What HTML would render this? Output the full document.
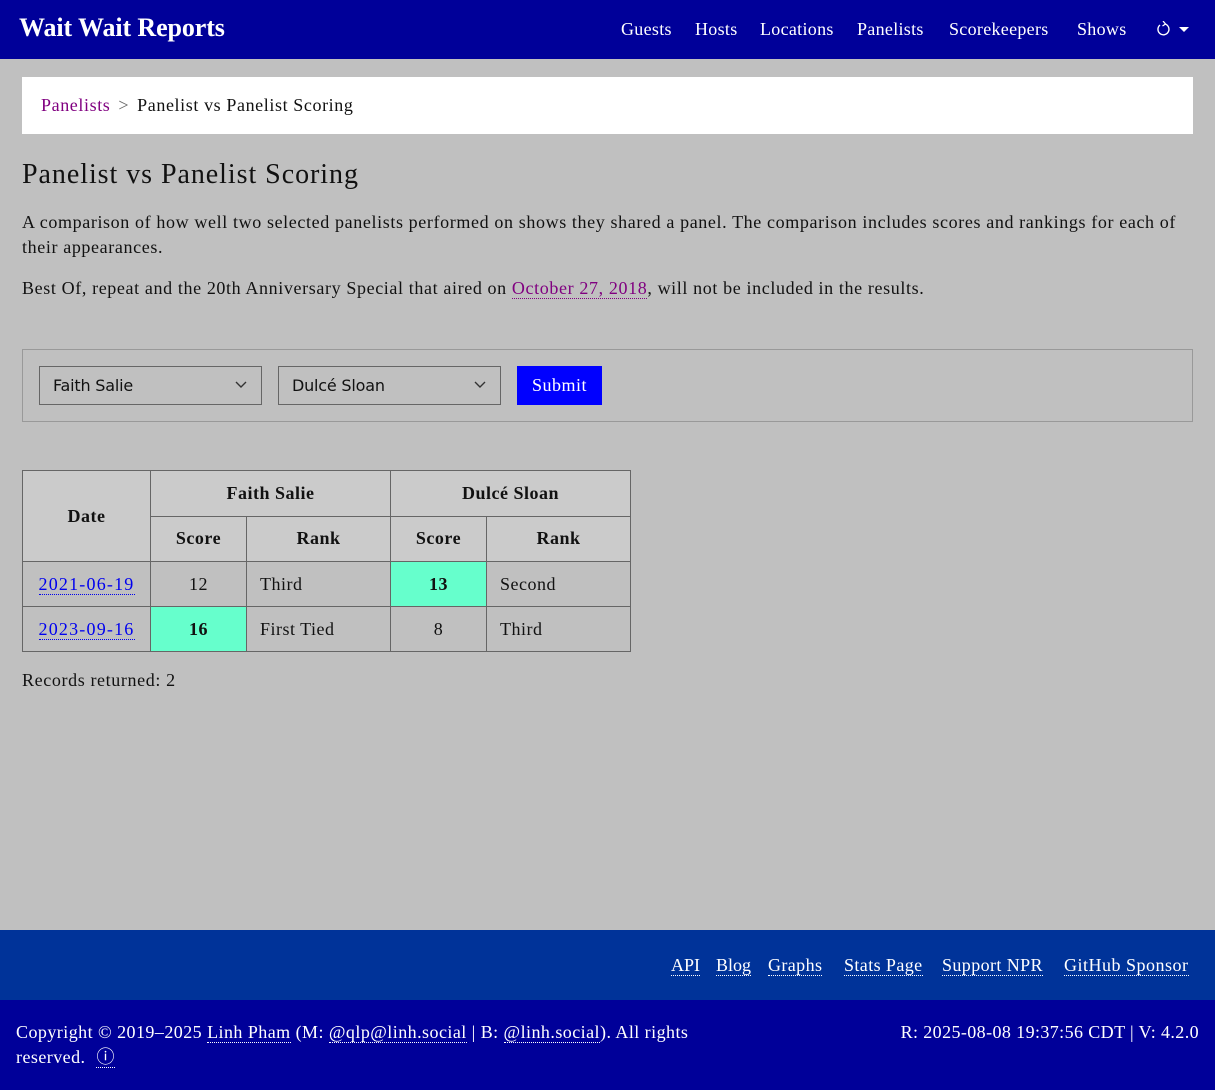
<!DOCTYPE html>
<html><head><meta charset="utf-8"><style>
*{box-sizing:border-box;margin:0;padding:0}
body{width:1215px;height:1090px;background:#c0c0c0;font-family:"Liberation Serif",serif;color:#111;position:relative;overflow:hidden}
.nav{position:absolute;left:0;top:0;width:1215px;height:59px;background:#000099;color:#fff}
.brand{position:absolute;left:19px;top:13px;font-size:26px;font-weight:bold;letter-spacing:-.1px}
.links{position:absolute;top:19px;font-size:18px;white-space:nowrap;letter-spacing:.3px}
.links span{position:absolute}
.bc{position:absolute;left:22px;top:77px;width:1171px;height:57px;background:#fff;font-size:18px;padding:18px 19px;white-space:nowrap;letter-spacing:.6px}
.bc a{color:#800080;text-decoration:none}
.bc .sep{color:#666;margin:0 8px}
h1{position:absolute;left:22px;top:159px;font-size:28px;font-weight:normal;letter-spacing:.95px}
p{position:absolute;left:22px;font-size:18px;line-height:25px;white-space:nowrap;letter-spacing:.62px}
.dl{color:#800080;text-decoration:none;border-bottom:1px dotted #800080}
.form{position:absolute;left:22px;top:349px;width:1171px;height:73px;border:1px solid #999}
.sel{position:absolute;top:16px;width:223px;height:39px;border:1px solid #666;font-family:"DejaVu Sans",sans-serif;font-size:16px;padding:9px 13px;letter-spacing:-.2px}
.sel svg{position:absolute;right:14px;top:14px}
.btn{position:absolute;left:494px;top:16px;width:85px;height:39px;background:#0000ff;color:#fff;font-size:18px;text-align:center;line-height:39px;letter-spacing:.5px}
table{position:absolute;left:22px;top:470px;border-collapse:collapse;font-size:18px;letter-spacing:.5px}
td,th{border:1px solid #666;height:45px;text-align:center}
th{background:#cbcbcb}
td.l{text-align:left;padding-left:13px}
td.g{background:#66ffcc;font-weight:bold}
td a{color:#0000ee;text-decoration:none;border-bottom:1px dotted #0000ee;letter-spacing:1.2px}
.f1{position:absolute;left:0;top:930px;width:1215px;height:70px;background:#003399;color:#fff;font-size:18px}
.f1 span{position:absolute;top:25px;border-bottom:1px dotted #fff;line-height:20px}
.f2{position:absolute;left:0;top:1000px;width:1215px;height:90px;background:#000099;color:#fff;font-size:18px;line-height:25px}
.u{border-bottom:1px dotted #fff}
</style></head><body>
<div class="nav"><div class="brand">Wait Wait Reports</div>
<div class="links"><span style="left:621px">Guests</span><span style="left:695px">Hosts</span><span style="left:760px">Locations</span><span style="left:857px">Panelists</span><span style="left:949px">Scorekeepers</span><span style="left:1077px">Shows</span></div>
<svg style="position:absolute;left:1156px;top:21px" width="36" height="16" viewBox="0 0 36 16"><path d="M4 4 A5.5 5.5 0 1 0 9 3" fill="none" stroke="#fff" stroke-width="1.4"/><path d="M7 0 L9.5 3 L6.5 5" fill="none" stroke="#fff" stroke-width="1.3"/><path d="M23 6 L33 6 L28 11 Z" fill="#fff"/></svg>
</div>
<div class="bc"><a>Panelists</a><span class="sep">&gt;</span>Panelist vs Panelist Scoring</div>
<h1>Panelist vs Panelist Scoring</h1>
<p style="top:210px">A comparison of how well two selected panelists performed on shows they shared a panel. The comparison includes scores and rankings for each of<br>their appearances.</p>
<p style="top:276px">Best Of, repeat and the 20th Anniversary Special that aired on <span class="dl">October 27, 2018</span>, will not be included in the results.</p>
<div class="form">
<div class="sel" style="left:16px">Faith Salie<svg width="12" height="8" viewBox="0 0 12 8"><path d="M1 1 L6 6 L11 1" fill="none" stroke="#333" stroke-width="1.4"/></svg></div>
<div class="sel" style="left:255px">Dulcé Sloan<svg width="12" height="8" viewBox="0 0 12 8"><path d="M1 1 L6 6 L11 1" fill="none" stroke="#333" stroke-width="1.4"/></svg></div>
<div class="btn">Submit</div>
</div>
<table>
<tr><th rowspan="2" style="width:128px;height:91px">Date</th><th colspan="2" style="width:240px">Faith Salie</th><th colspan="2" style="width:240px">Dulcé Sloan</th></tr>
<tr><th style="width:96px">Score</th><th style="width:144px">Rank</th><th style="width:96px">Score</th><th style="width:144px">Rank</th></tr>
<tr><td><a>2021-06-19</a></td><td>12</td><td class="l">Third</td><td class="g">13</td><td class="l">Second</td></tr>
<tr><td><a>2023-09-16</a></td><td class="g">16</td><td class="l">First Tied</td><td>8</td><td class="l">Third</td></tr>
</table>
<p style="top:668px">Records returned: 2</p>
<div class="f1"><span style="left:671px">API</span><span style="left:716px">Blog</span><span style="left:768px;letter-spacing:.4px">Graphs</span><span style="left:844px;letter-spacing:.4px">Stats Page</span><span style="left:942px;letter-spacing:.4px">Support NPR</span><span style="left:1064px;letter-spacing:.5px">GitHub Sponsor</span></div>
<div class="f2">
<div style="position:absolute;left:16px;top:20px;white-space:nowrap;letter-spacing:.45px">Copyright © 2019–2025 <span class="u">Linh Pham</span> (M: <span class="u">@qlp@linh.social</span> | B: <span class="u">@linh.social</span>). All rights<br>reserved. <span class="u" style="margin-left:6px">ⓘ</span></div>
<div style="position:absolute;right:16px;top:20px;white-space:nowrap;letter-spacing:.4px">R: 2025-08-08 19:37:56 CDT | V: 4.2.0</div>
</div>
</body></html>
